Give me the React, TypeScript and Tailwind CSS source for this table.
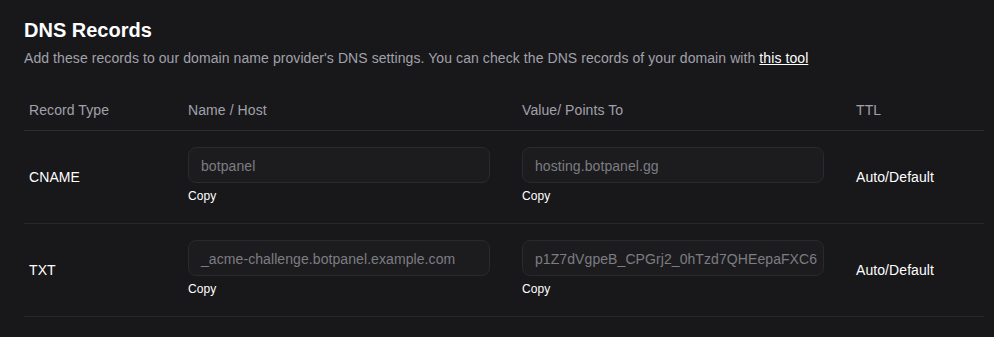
import React from "react";

const rows = [
  { type: "CNAME", name: "botpanel", value: "hosting.botpanel.gg", ttl: "Auto/Default" },
  {
    type: "TXT",
    name: "_acme-challenge.botpanel.example.com",
    value: "p1Z7dVgpeB_CPGrj2_0hTzd7QHEepaFXC6",
    ttl: "Auto/Default",
  },
];

function Field({ text }: { text: string }) {
  return (
    <div className="flex flex-col items-start pt-4 pb-[19px]">
      <div className="h-[36px] w-[302px] rounded-lg border border-[#2a2a2e] bg-[#1c1c1f] px-3 pt-px flex items-center overflow-hidden whitespace-nowrap text-[14px] text-[#7d7d82]">
        {text}
      </div>
      <button className="mt-[5px] text-[12px] leading-4 text-white">Copy</button>
    </div>
  );
}

export default function App() {
  return (
    <div
      className="min-h-[337px] w-full bg-[#18181b] px-6 pt-4 tracking-[0.08px]"
      style={{ fontFamily: '"Liberation Sans", Arial, sans-serif' }}
    >
      <h1 className="text-[20px] leading-7 font-bold text-white tracking-normal">DNS Records</h1>
      <p className="mt-1 text-[14px] leading-5 text-[#a1a1aa]">
        Add these records to our domain name provider's DNS settings. You can check the DNS records of your domain with{" "}
        <a className="text-white underline">this tool</a>
      </p>
      <div className="mt-[18px] w-[960px]">
        <div className="grid grid-cols-[159px_334px_334px_133px] border-b border-[#2e2e32] pt-[14px] pb-[10px] text-[14px] leading-5 text-[#a1a1aa]">
          <div className="pl-[5px]">Record Type</div>
          <div className="pl-[5px]">Name / Host</div>
          <div className="pl-[5px]">Value/ Points To</div>
          <div className="pl-[5px]">TTL</div>
        </div>
        {rows.map((r) => (
          <div
            key={r.type}
            className="grid grid-cols-[159px_334px_334px_133px] items-center border-b border-[#27272a] text-[14px] leading-5 text-white"
          >
            <div className="pl-[5px]">{r.type}</div>
            <div className="pl-[5px]">
              <Field text={r.name} />
            </div>
            <div className="pl-[5px]">
              <Field text={r.value} />
            </div>
            <div className="pl-[5px]">{r.ttl}</div>
          </div>
        ))}
      </div>
    </div>
  );
}
